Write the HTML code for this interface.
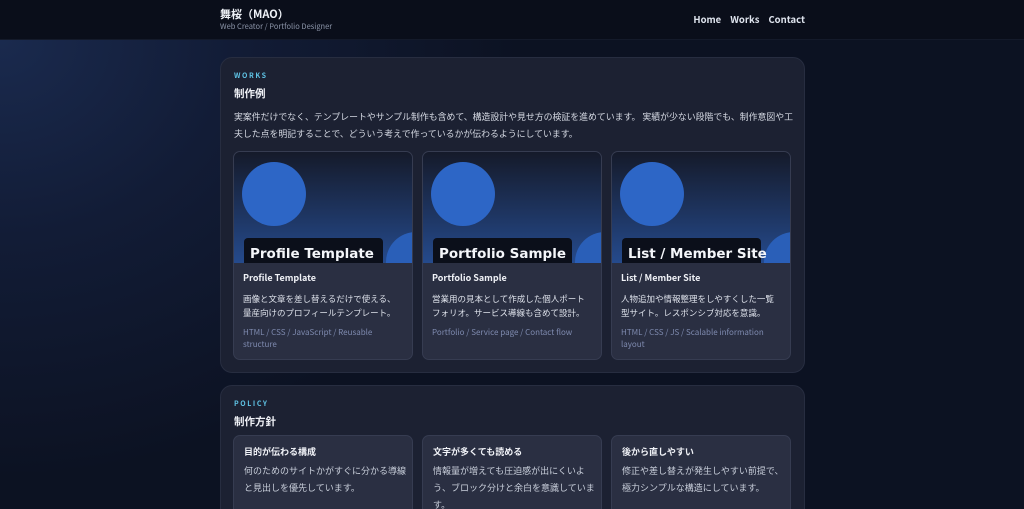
<!DOCTYPE html>
<html><head><meta charset="utf-8"><style>
*{margin:0;padding:0;box-sizing:border-box}
html{width:1024px;height:509px;overflow:hidden;background:#0c1222}
body{width:1024px;height:509px;overflow:hidden;font-family:"Noto Sans CJK JP","Liberation Sans",sans-serif;color:#e6e9f2;
background:radial-gradient(ellipse 520px 440px at 0px 40px,#1a2a4e 0%,#121c36 45%,#0c1222 100%);position:relative}
header{position:absolute;left:0;top:0;width:1024px;height:40px;background:#0a0e1a;border-bottom:1px solid #141a2a}
.logo{position:absolute;left:220px;top:6px;font-size:11px;font-weight:bold;color:#eef1f7}
.sub{position:absolute;left:220px;top:21px;font-size:7.5px;color:#8b94a8}
nav{position:absolute;right:219px;top:12px;font-size:9.5px;font-weight:bold;color:#dfe4ee}
nav span{margin-left:9px}
.panel{position:absolute;left:220px;width:585px;background:#1c2132;border:1px solid #272d40;border-radius:12px;overflow:hidden}
.eyebrow{position:absolute;left:13px;font-size:7px;font-weight:bold;letter-spacing:1.6px;color:#5fc4e6}
.h2{position:absolute;left:13px;font-size:10.5px;font-weight:bold;color:#f0f2f7}
.lead{position:absolute;left:13px;top:50px;width:566px;font-size:8.9px;line-height:17px;color:#d5d9e3}
.card{position:absolute;top:93px;width:180px;height:209px;background:#2a2f42;border:1px solid #363c51;border-radius:7px;overflow:hidden}
.img{position:absolute;left:0;top:0;width:180px;height:111px;background:linear-gradient(#151a2a,#254a8c);overflow:hidden}
.c1{position:absolute;left:8px;top:10px;width:64px;height:64px;border-radius:50%;background:#2d66c6}
.c2{position:absolute;left:152px;top:80px;width:60px;height:60px;border-radius:50%;background:#2a5fb8}
.lab{position:absolute;left:10px;top:86px;width:139px;height:30px;background:#0b0f1a;border-radius:4px;font-family:"DejaVu Sans",sans-serif;font-weight:bold;font-size:13.5px;color:#f4f6fa;padding:8px 0 0 6px;white-space:nowrap}
.ct{position:absolute;left:9px;top:119px;font-size:9px;font-weight:bold;color:#f0f2f7}
.cd{position:absolute;left:9px;top:140px;width:157px;font-size:8.5px;line-height:14px;color:#dde1ea}
.tg{position:absolute;left:9px;top:175px;width:160px;font-size:8px;line-height:11.5px;color:#7f8bb0}
.pc{position:absolute;top:49px;width:180px;height:90px;background:#2a2f42;border:1px solid #363c51;border-radius:7px}
.pc b{position:absolute;left:10px;top:9px;font-size:9px;color:#f0f2f7}
.pc p{position:absolute;left:10px;top:26px;width:164px;font-size:9px;line-height:17px;color:#c9cfdb}
</style></head><body>
<header><div class="logo">舞桜（MAO）</div><div class="sub">Web Creator / Portfolio Designer</div>
<nav><span>Home</span><span>Works</span><span>Contact</span></nav></header>

<div class="panel" style="top:57px;height:316px">
<div class="eyebrow" style="top:13px">WORKS</div>
<div class="h2" style="top:28px">制作例</div>
<div class="lead">実案件だけでなく、テンプレートやサンプル制作も含めて、構造設計や見せ方の検証を進めています。 実績が少ない段階でも、制作意図や工夫した点を明記することで、どういう考えで作っているかが伝わるようにしています。</div>
<div class="card" style="left:12px"><div class="img"><div class="c1"></div><div class="c2"></div><div class="lab">Profile Template</div></div>
<div class="ct">Profile Template</div><div class="cd">画像と文章を差し替えるだけで使える、量産向けのプロフィールテンプレート。</div><div class="tg">HTML / CSS / JavaScript / Reusable structure</div></div>
<div class="card" style="left:201px"><div class="img"><div class="c1"></div><div class="c2"></div><div class="lab">Portfolio Sample</div></div>
<div class="ct">Portfolio Sample</div><div class="cd">営業用の見本として作成した個人ポートフォリオ。サービス導線も含めて設計。</div><div class="tg">Portfolio / Service page / Contact flow</div></div>
<div class="card" style="left:390px"><div class="img"><div class="c1"></div><div class="c2"></div><div class="lab">List / Member Site</div></div>
<div class="ct">List / Member Site</div><div class="cd">人物追加や情報整理をしやすくした一覧型サイト。レスポンシブ対応を意識。</div><div class="tg">HTML / CSS / JS / Scalable information layout</div></div>
</div>

<div class="panel" style="top:385px;height:140px">
<div class="eyebrow" style="top:13px">POLICY</div>
<div class="h2" style="top:28px">制作方針</div>
<div class="pc" style="left:12px"><b>目的が伝わる構成</b><p>何のためのサイトかがすぐに分かる導線と見出しを優先しています。</p></div>
<div class="pc" style="left:201px"><b>文字が多くても読める</b><p>情報量が増えても圧迫感が出にくいよう、ブロック分けと余白を意識しています。</p></div>
<div class="pc" style="left:390px"><b>後から直しやすい</b><p>修正や差し替えが発生しやすい前提で、極力シンプルな構造にしています。</p></div>
</div>
</body></html>
